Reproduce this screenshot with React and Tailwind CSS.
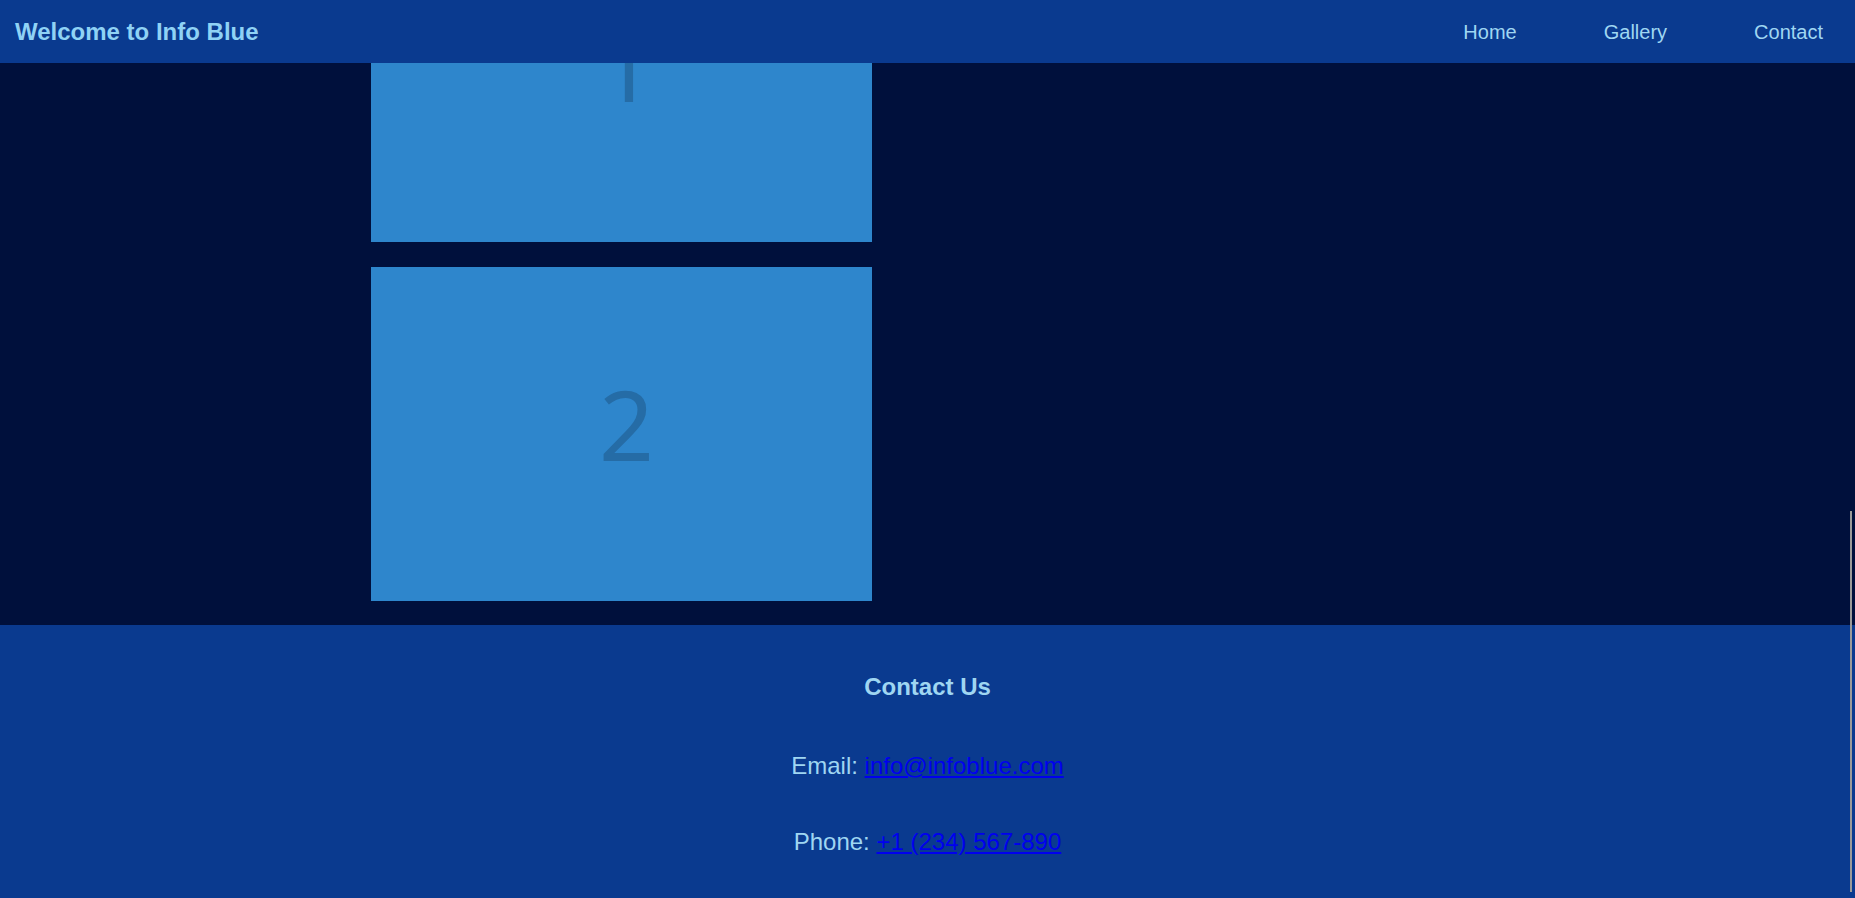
export default function App() {
  const sans = { fontFamily: '"Liberation Sans", Arial, sans-serif' };
  return (
    <div className="min-h-screen bg-[#00103c] relative" style={sans}>
      <header className="h-[63px] bg-[#0a3a8f] flex items-center justify-between pl-[15px] pr-[32px] relative z-10">
        <h1 className="text-[24px] font-bold text-[#8fd2f5]">Welcome to Info Blue</h1>
        <nav className="flex gap-[87px] text-[20px] text-[#9fd6f2]">
          <a href="#">Home</a>
          <a href="#">Gallery</a>
          <a href="#">Contact</a>
        </nav>
      </header>
      <main className="h-[562px] overflow-hidden">
        <div className="-mt-[155px] pl-[371px] flex flex-col gap-[25px]">
          {["1", "2"].map((n) => (
            <div
              key={n}
              className="w-[501px] h-[334px] bg-[#2e86cc] flex items-center justify-center pb-[20px] pl-[10px] text-[96px] leading-none text-[#256ca6]"
              style={{ fontFamily: '"Noto Sans", sans-serif' }}
            >
              {n}
            </div>
          ))}
        </div>
      </main>
      <footer className="bg-[#0a3a8f] pt-[48px] pb-[60px] text-center text-[#9fd6f2] text-[24px] leading-[28px]">
        <h2 className="font-bold text-[24px]">Contact Us</h2>
        <p className="mt-[51px]">
          Email: <a href="#" className="text-[#0000ee] underline">info@infoblue.com</a>
        </p>
        <p className="mt-[48px]">
          Phone: <a href="#" className="text-[#0000ee] underline">+1 (234) 567-890</a>
        </p>
      </footer>
      <div className="fixed right-[3px] top-[511px] h-[381px] w-[2px] bg-[#9a9a9a]" />
    </div>
  );
}
